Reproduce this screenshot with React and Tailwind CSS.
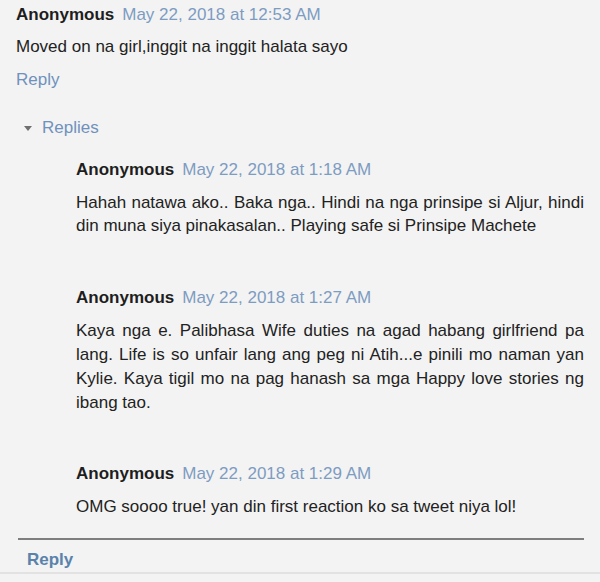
function Header({ date }) {
    return (
        <div className="leading-[24px] h-[24px] whitespace-nowrap">
            <span className="font-bold text-[#1e1e1e]">Anonymous</span>
            <span className="ml-[8px] text-[#7d9cc2]">{date}</span>
        </div>
    );
}

const replies = [
    {
        date: "May 22, 2018 at 1:18 AM",
        text: "Hahah natawa ako.. Baka nga.. Hindi na nga prinsipe si Aljur, hindi din muna siya pinakasalan.. Playing safe si Prinsipe Machete",
        lh: "leading-[23px]",
        mb: "mb-[49px]",
    },
    {
        date: "May 22, 2018 at 1:27 AM",
        text: "Kaya nga e. Palibhasa Wife duties na agad habang girlfriend pa lang. Life is so unfair lang ang peg ni Atih...e pinili mo naman yan Kylie. Kaya tigil mo na pag hanash sa mga Happy love stories ng ibang tao.",
        lh: "leading-[24px]",
        mb: "mb-[47px]",
    },
    {
        date: "May 22, 2018 at 1:29 AM",
        text: "OMG soooo true! yan din first reaction ko sa tweet niya lol!",
        lh: "leading-[24px]",
        mb: "mb-[19px]",
    },
];

export default function App() {
    return (
        <div className="w-[600px] h-[582px] overflow-hidden bg-[#f3f3f3] text-[17px] text-[#222] font-['Liberation_Sans',Arial,sans-serif]">
            <div className="pl-[16px] pt-[3px]">
                <Header date="May 22, 2018 at 12:53 AM" />
                <p className="mt-[8px] leading-[24px]">Moved on na girl,inggit na inggit halata sayo</p>
                <div className="mt-[9px] leading-[24px] text-[#6f91bd]">Reply</div>
            </div>

            <div className="mt-[24px] pl-[24px] flex items-center h-[24px]">
                <svg width="8" height="5" viewBox="0 0 8 5" className="mr-[10px]">
                    <path d="M0 0 L8 0 L4 5 Z" fill="#6f6f6f" />
                </svg>
                <span className="text-[#6f91bd] leading-[24px]">Replies</span>
            </div>

            <div className="mt-[18px] pl-[76px] pr-[16px]">
                {replies.map((r) => (
                    <div key={r.date} className={r.mb}>
                        <Header date={r.date} />
                        <p className={"mt-[9px] text-justify " + r.lh}>{r.text}</p>
                    </div>
                ))}
            </div>

            <div className="ml-[18px] mr-[16px] h-[2px] bg-[#7e7e7e]"></div>
            <div className="pl-[27px] pt-[8px] h-[32px] leading-[24px] font-bold text-[#5a82ab]">Reply</div>
            <div className="h-[2px] bg-[#e2e2e2]"></div>
        </div>
    );
}
